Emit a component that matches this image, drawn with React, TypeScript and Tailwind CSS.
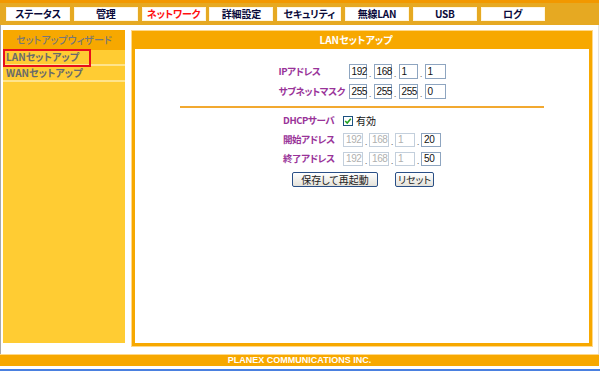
import type React from "react"

const tabs = ["ステータス", "管理", "ネットワーク", "詳細設定", "セキュリティ", "無線LAN", "USB", "ログ"]

const jp = "font-['Noto_Sans_CJK_JP',sans-serif] [font-feature-settings:'palt']"

const IpBox: React.FC<{ value: string; w: string; disabled?: boolean }> = ({ value, w, disabled }) => (
  <div
    className={`${w} h-full border bg-white pl-[2px] flex items-center font-['Liberation_Sans',sans-serif] text-[10px] tracking-[-0.4px] leading-none ${
      disabled ? "border-[#c3cfdc] text-[#b0b0b0]" : "border-[#8ea5c0] text-[#111]"
    }`}
  >
    {value}
  </div>
)

const Dot: React.FC<{ w: string }> = ({ w }) => (
  <div className={`${w} h-full flex items-end justify-center pb-[1px] text-[8px] leading-none text-[#666]`}>.</div>
)

const Ip: React.FC<{ parts: string[]; widths: string[]; sep: string; disabledUpTo?: number }> = ({
  parts,
  widths,
  sep,
  disabledUpTo = 0,
}) => (
  <div className="flex h-full">
    {parts.map((p, i) => (
      <div key={i} className="flex h-full">
        {i > 0 && <Dot w={sep} />}
        <IpBox value={p} w={widths[i]} disabled={i < disabledUpTo} />
      </div>
    ))}
  </div>
)

const Label: React.FC<{ children: React.ReactNode }> = ({ children }) => (
  <div className={`${jp} h-full flex items-center whitespace-nowrap text-[9.5px] tracking-[-0.4px] font-bold text-[#993399] leading-none`}>
    {children}
  </div>
)

const App: React.FC = () => {
  return (
    <div className={`w-[600px] h-[371px] bg-white overflow-hidden flex flex-col ${jp}`}>
      {/* top tabs */}
      <div className="h-[25px] w-[599px] bg-[#E6A922] border-t-[3px] border-[#F29800] pt-[4px] pl-[6px] flex gap-[3.8px]">
        {tabs.map((t) => (
          <div
            key={t}
            className={`w-[64px] h-[14px] bg-white border border-[#fff6e0] flex items-center justify-center whitespace-nowrap text-[10px] tracking-[-0.2px] font-bold leading-none ${
              t === "ネットワーク" ? "text-[#ff1010]" : "text-[#0a0a3a]"
            }`}
          >
            {t}
          </div>
        ))}
      </div>

      {/* body */}
      <div className="h-[329px] w-[599px] border-l border-[#a8a8a8] border-r border-r-[#e4e4e4] pl-[2px] pt-[5px] flex">
        {/* sidebar */}
        <div className="w-[122px] h-[313px] bg-[#FFCC33] flex flex-col">
          <div className="h-[20px] bg-[#F7A800] flex items-center justify-center text-[10px] font-medium text-[#777] leading-none">
            セットアップウィザード
          </div>
          <div className="relative h-[16px] border-b-2 border-[#FFE48C] pl-[3px] flex items-center text-[10px] font-bold text-[#6a6a6a] leading-none">
            LANセットアップ
            <span className="absolute left-0 top-[-1px] w-[88px] h-[18px] border-2 border-[#e8101a]" />
          </div>
          <div className="h-[16px] border-b-2 border-[#FFE48C] pl-[3px] flex items-center text-[10px] font-bold text-[#6a6a6a] leading-none">
            WANセットアップ
          </div>
        </div>

        {/* main panel */}
        <div className="ml-[6px] w-[462px] h-[317px] border border-[#FFD98A]">
          <div className="w-full h-full bg-[#F7A800] px-[3px] pb-[3px] flex flex-col">
            <div className="h-[18px] flex items-center justify-center text-[10px] font-bold text-white leading-none pr-[12px]">
              LANセットアップ
            </div>
            <div className="flex-1 bg-white flex flex-col items-center pt-[15px]">
              <div className="grid grid-cols-[70px_auto] grid-rows-[15px_15px] gap-y-[5px]">
                <Label>IPアドレス</Label>
                <Ip parts={["192", "168", "1", "1"]} widths={["w-[18px]", "w-[18px]", "w-[19px]", "w-[21px]"]} sep="w-[7px]" />
                <Label>サブネットマスク</Label>
                <Ip parts={["255", "255", "255", "0"]} widths={["w-[18px]", "w-[18px]", "w-[19px]", "w-[21px]"]} sep="w-[7px]" />
              </div>

              <div className="mt-[7px] w-[364px] h-[2px] bg-[#F2A930]" />

              <div className="mt-[6px] grid grid-cols-[60px_auto] grid-rows-[14px_14px_14px] gap-y-[5px]">
                <Label>DHCPサーバ</Label>
                <div className="flex items-center gap-[3px]">
                  <svg width="10" height="10" viewBox="0 0 10 10">
                    <rect x="0.5" y="0.5" width="9" height="9" fill="#fff" stroke="#1c5180" />
                    <path d="M2.2 5 L4.2 7 L7.8 2.8" fill="none" stroke="#21a121" strokeWidth="1.6" />
                  </svg>
                  <span className="text-[10px] text-[#111] leading-none">有効</span>
                </div>
                <Label>開始アドレス</Label>
                <Ip parts={["192", "168", "1", "20"]} widths={["w-[20px]", "w-[20px]", "w-[20px]", "w-[20px]"]} sep="w-[6px]" disabledUpTo={3} />
                <Label>終了アドレス</Label>
                <Ip parts={["192", "168", "1", "50"]} widths={["w-[20px]", "w-[20px]", "w-[20px]", "w-[20px]"]} sep="w-[6px]" disabledUpTo={3} />
              </div>

              <div className="mt-[6px] flex gap-[17px] ml-[2px]">
                <button className="w-[86px] h-[15px] rounded-[2px] border border-[#2a4f86] bg-gradient-to-b from-white to-[#e4e2da] flex items-center justify-center text-[10px] text-[#222] leading-none">
                  保存して再起動
                </button>
                <button className="w-[39px] h-[15px] rounded-[2px] border border-[#2a4f86] bg-gradient-to-b from-white to-[#e4e2da] flex items-center justify-center text-[10px] text-[#222] leading-none">
                  リセット
                </button>
              </div>
            </div>
          </div>
        </div>
      </div>

      {/* footer */}
      <div className="w-[599px] h-[12px] border-t border-[#FFD98A] bg-[#F7A800] flex items-center justify-center font-['Liberation_Sans',sans-serif] text-[9px] font-bold text-white leading-none">
        PLANEX COMMUNICATIONS INC.
      </div>
      <div className="mt-[3px] h-[2px] w-full bg-[#4a80e0]" />
    </div>
  )
}

export default App
